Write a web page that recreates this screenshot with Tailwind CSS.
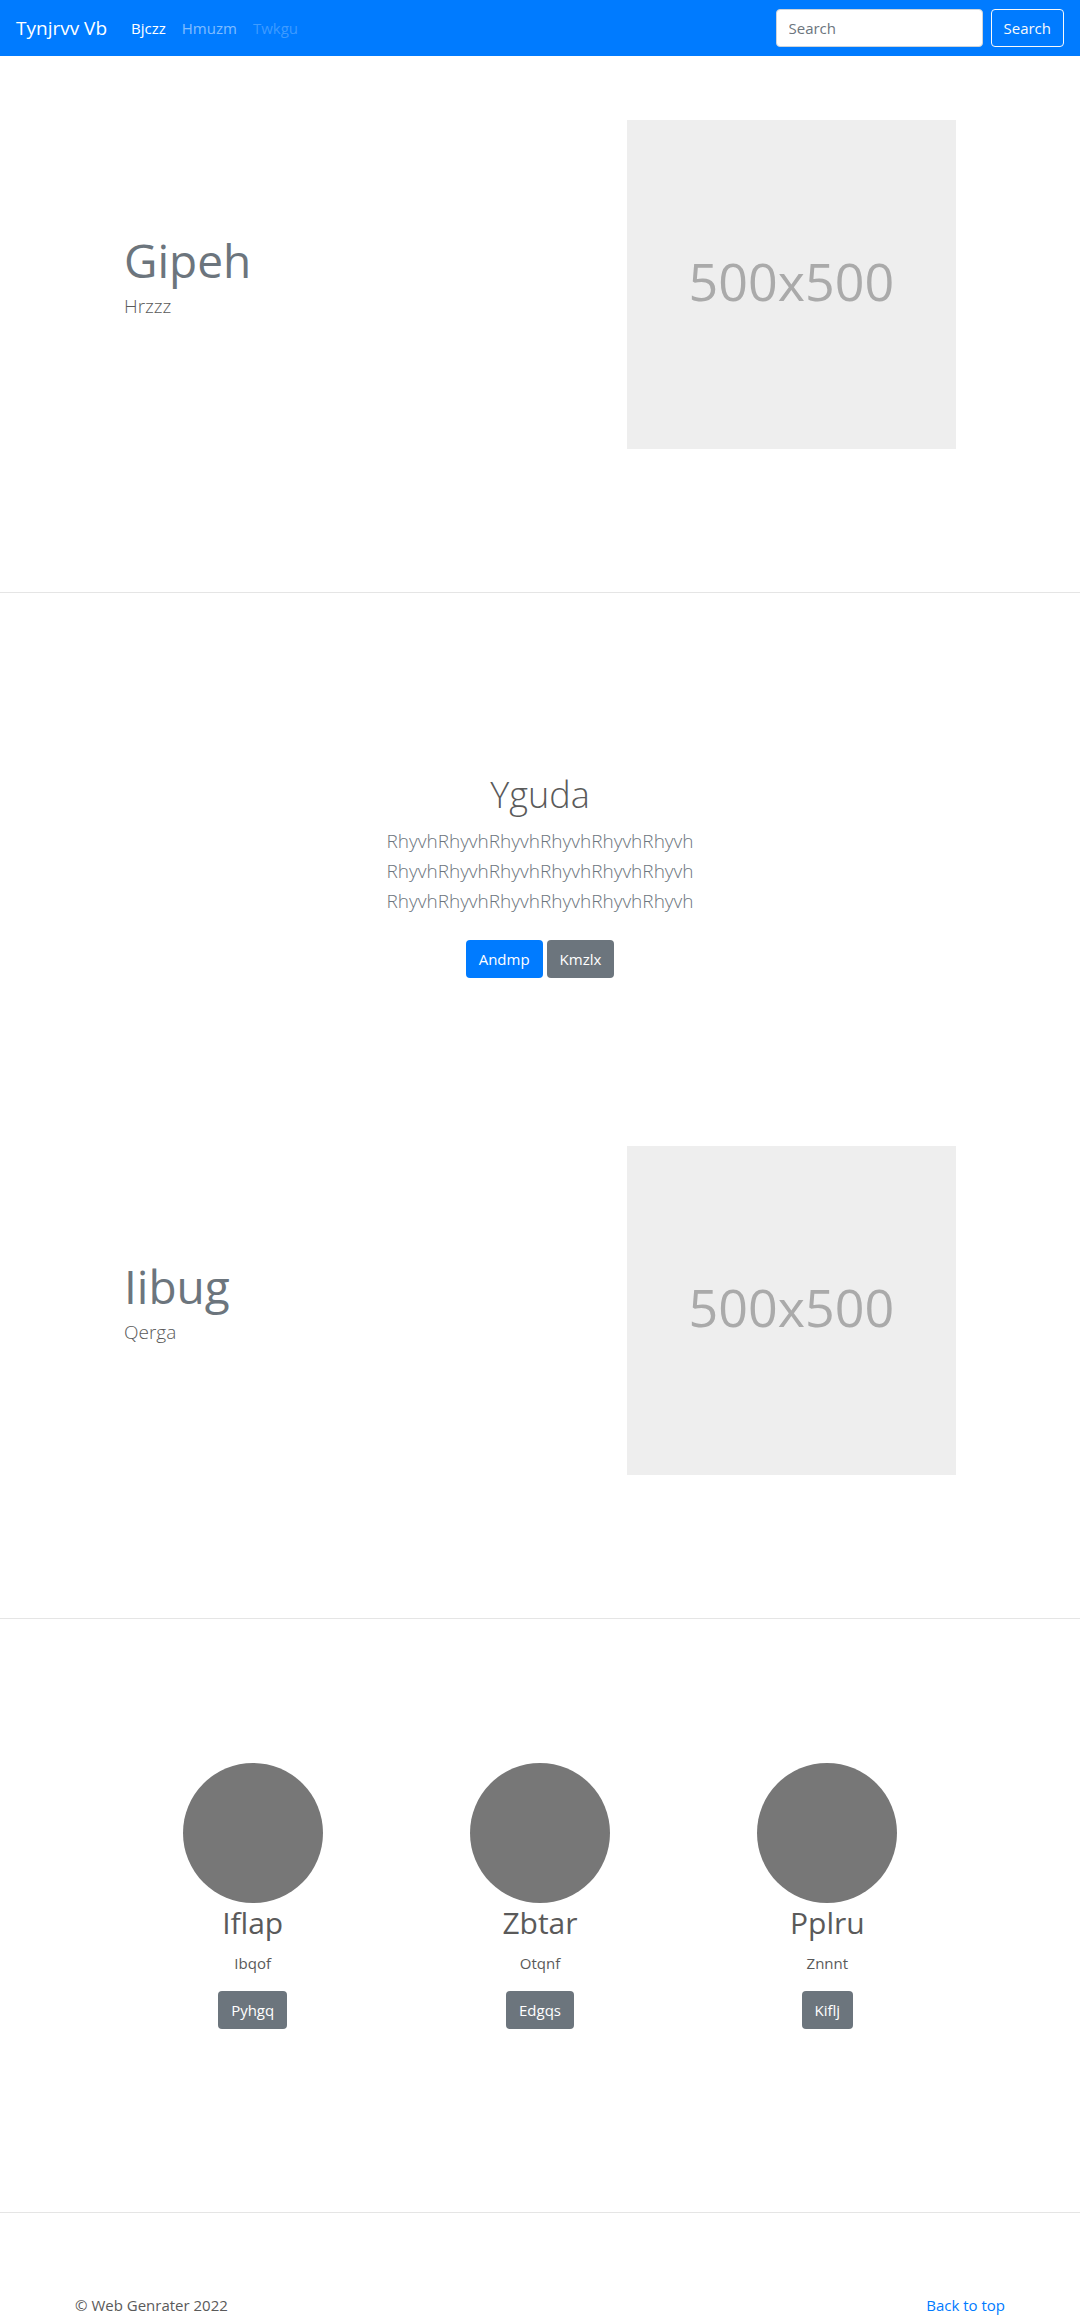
<!DOCTYPE html>
<html lang="en">
<head>
<meta charset="utf-8">
<meta name="viewport" content="width=device-width, initial-scale=1">
<title>Tynjrvv Vb</title>
<script src="https://cdn.jsdelivr.net/npm/@tailwindcss/browser@4"></script>
</head>
<body id="top" class="bg-white text-[#5a5a5a] text-[15px] leading-6 font-['Open_Sans','Noto_Sans',sans-serif]">
<header>
  <nav class="flex flex-wrap items-center bg-[#007bff] px-4 py-[9px]">
    <a href="#" class="mr-6 text-[19px] leading-[30px] text-white">Tynjrvv Vb</a>
    <ul class="flex gap-4">
      <li><a href="#" class="text-white">Bjczz</a></li>
      <li><a href="#" class="text-white/50">Hmuzm</a></li>
      <li><a href="#" class="text-white/25">Twkgu</a></li>
    </ul>
    <form class="ml-auto flex gap-2">
      <input type="search" aria-label="Search" placeholder="Search" class="h-[38px] w-[207px] rounded border border-[#ced4da] bg-white px-3 placeholder:text-[#6c757d]">
      <button type="button" class="h-[38px] rounded border border-[#f8f9fa] px-3 text-[#f8f9fa]">Search</button>
    </form>
  </nav>
</header>

<main>
  <section class="mx-auto grid max-w-[862px] grid-cols-12 items-center pt-16 pb-[143px]">
    <div class="col-span-7 px-[15px] pb-5">
      <h2 class="text-[46px] leading-[62px] text-[#6c757d]">Gipeh</h2>
      <p class="text-[19px] leading-[30px] font-light">Hrzzz</p>
    </div>
    <div class="col-span-5 px-[15px]">
      <div class="flex aspect-square items-center justify-center bg-[#eee] pb-2 text-[52px] text-[#aaa]">500x500</div>
    </div>
  </section>
  <hr class="border-[#e5e5e5]">

  <section class="flex flex-col items-center px-4 pt-[179px] pb-[168px] text-center">
    <h1 class="mb-2 text-[36px] leading-[46px] font-light">Yguda</h1>
    <p class="mb-4 text-[19px] leading-[30px] font-light text-[#6c757d]">RhyvhRhyvhRhyvhRhyvhRhyvhRhyvh<br>RhyvhRhyvhRhyvhRhyvhRhyvhRhyvh<br>RhyvhRhyvhRhyvhRhyvhRhyvhRhyvh</p>
    <div class="flex gap-1 pt-2">
      <button type="button" class="h-[38px] rounded bg-[#007bff] px-[13px] text-white">Andmp</button>
      <button type="button" class="h-[38px] rounded bg-[#6c757d] px-[13px] text-white">Kmzlx</button>
    </div>
  </section>

  <section class="mx-auto grid max-w-[862px] grid-cols-12 items-center pb-[143px]">
    <div class="col-span-7 px-[15px] pb-5">
      <h2 class="text-[46px] leading-[62px] text-[#6c757d]">Iibug</h2>
      <p class="text-[19px] leading-[30px] font-light">Qerga</p>
    </div>
    <div class="col-span-5 px-[15px]">
      <div class="flex aspect-square items-center justify-center bg-[#eee] pb-2 text-[52px] text-[#aaa]">500x500</div>
    </div>
  </section>
  <hr class="border-[#e5e5e5]">

  <section class="mx-auto grid max-w-[862px] grid-cols-3 pt-36 pb-[183px]">
    <div class="flex flex-col items-center">
      <div class="size-[140px] rounded-full bg-[#777]"></div>
      <h2 class="mb-2 text-[30px] leading-10">Iflap</h2>
      <p class="mb-4">Ibqof</p>
      <button type="button" class="h-[38px] rounded bg-[#6c757d] px-[13px] text-white">Pyhgq</button>
    </div>
    <div class="flex flex-col items-center">
      <div class="size-[140px] rounded-full bg-[#777]"></div>
      <h2 class="mb-2 text-[30px] leading-10">Zbtar</h2>
      <p class="mb-4">Otqnf</p>
      <button type="button" class="h-[38px] rounded bg-[#6c757d] px-[13px] text-white">Edgqs</button>
    </div>
    <div class="flex flex-col items-center">
      <div class="size-[140px] rounded-full bg-[#777]"></div>
      <h2 class="mb-2 text-[30px] leading-10">Pplru</h2>
      <p class="mb-4">Znnnt</p>
      <button type="button" class="h-[38px] rounded bg-[#6c757d] px-[13px] text-white">Kiflj</button>
    </div>
  </section>
  <hr class="border-[#e5e5e5]">
</main>

<footer class="mx-auto flex max-w-[960px] justify-between px-[15px] pt-20">
  <p>© Web Genrater 2022</p>
  <a href="#top" class="text-[#007bff]">Back to top</a>
</footer>
</body>
</html>
